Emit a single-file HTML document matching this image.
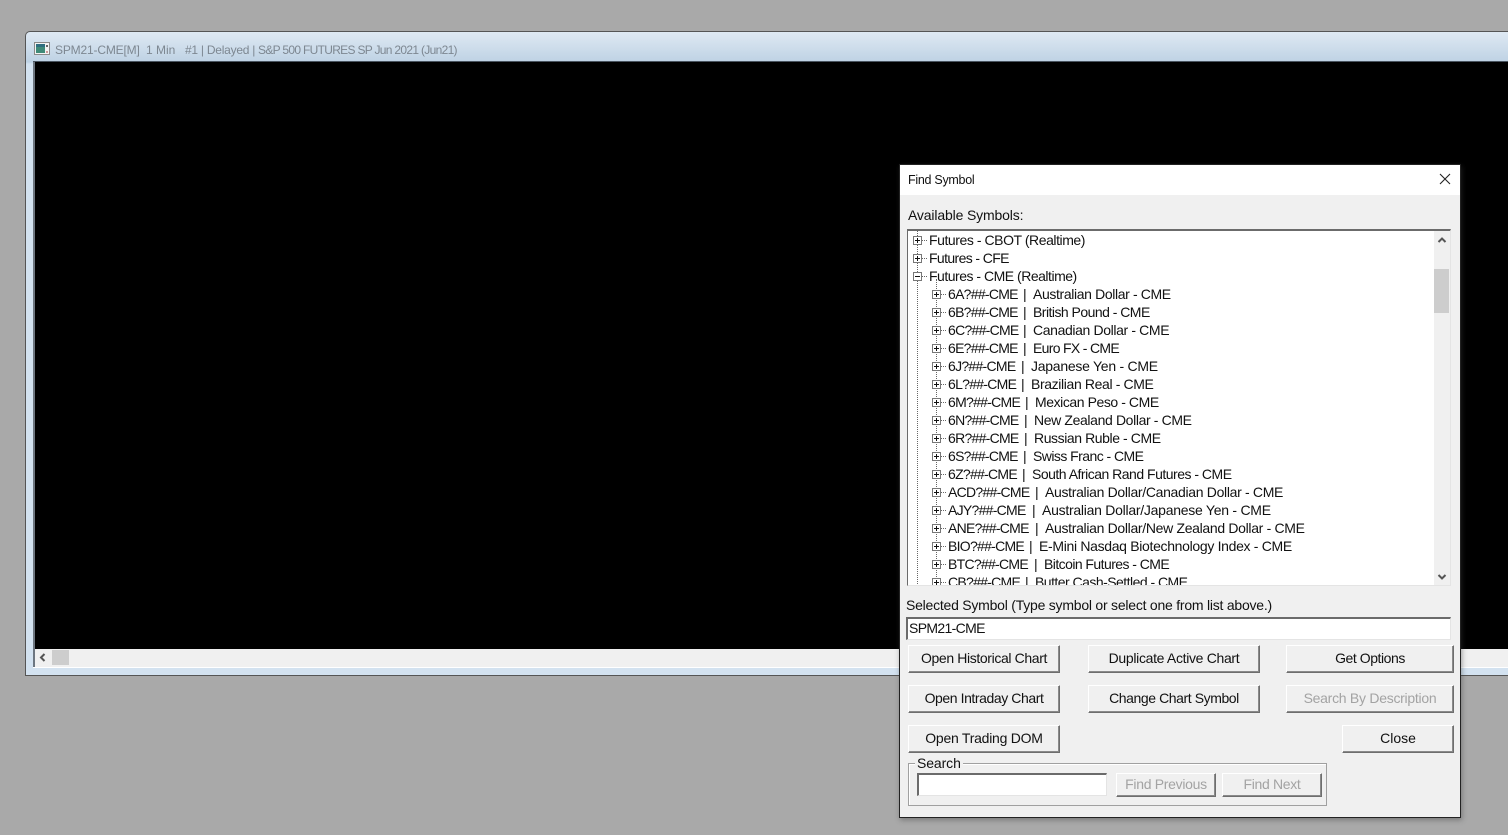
<!DOCTYPE html>
<html><head><meta charset="utf-8"><style>
*{box-sizing:border-box}
html,body{margin:0;padding:0}
body{width:1508px;height:835px;background:#a9a9a9;position:relative;overflow:hidden;font-family:"Liberation Sans",sans-serif;font-size:14px;color:#111}
.a{position:absolute}
.t{position:absolute;white-space:pre;line-height:18px;height:18px}
.b{position:absolute;background:#f0f0f0;border:1px solid;border-color:#fff #6e6e6e #6e6e6e #fff;box-shadow:inset -1px -1px 0 #8a8a8a;text-align:center;font-size:14px;color:#111;white-space:pre}
.d{color:#a3a3a3}
.in{position:absolute;background:#fff;border:1px solid;border-color:#6b6b6b #e4e4e4 #e4e4e4 #6b6b6b;border-top-width:2px;border-left-width:2px}
.r{position:absolute;left:0;width:520px;height:18px}
.r span{position:absolute;top:0;line-height:18px;white-space:pre;font-size:14px;letter-spacing:-.37px}
.r em{position:absolute;left:40px;top:0;line-height:18px;white-space:pre;font-style:normal;letter-spacing:-.72px}
.p{position:absolute;width:9px;height:9px;border:1px solid #777;background:#fff}
.p:before{content:"";position:absolute;left:1px;top:3px;width:5px;height:1px;background:#111}
.p.o:after{content:"";position:absolute;left:3px;top:1px;width:1px;height:5px;background:#111}
.dh{position:absolute;height:1px;width:5px;border-top:1px dotted #666}
.ti{color:#7d8791;font-size:12px;top:41px}
</style></head><body>
<div class="a" style="left:25px;top:31px;width:1483px;height:645px;border:1px solid #555;border-right:0;border-radius:5px 0 0 0;background:linear-gradient(#dfe9f3 0,#bed2e4 30px,#d3e2f0 32px);"></div>
<svg class="a" style="left:34px;top:42px" width="17" height="14"><rect x=".5" y=".5" width="15" height="12" fill="#f4f4f4" stroke="#8a8a8a"/><rect x="2" y="2" width="9" height="9" fill="#3f8a78"/><rect x="2" y="2" width="9" height="3" fill="#2f6f80"/><rect x="12" y="3" width="2" height="2" fill="#666"/><rect x="12" y="9" width="2" height="2" fill="#c99"/></svg>
<div class="t ti" style="left:55px;letter-spacing:-.17px">SPM21-CME[M]</div>
<div class="t ti" style="left:146px">1 Min</div>
<div class="t ti" style="left:185px;letter-spacing:-.25px">#1 | Delayed | </div>
<div class="t ti" style="left:258px;letter-spacing:-.69px">S&amp;P 500 FUTURES SP Jun 2021 (Jun21)</div>
<div class="a" style="left:33px;top:61px;width:1475px;height:1px;background:#4a5560"></div>
<div class="a" style="left:33px;top:62px;width:2px;height:606px;background:#6d7680"></div>
<div class="a" style="left:35px;top:62px;width:1473px;height:587px;background:#000"></div>
<div class="a" style="left:35px;top:649px;width:1473px;height:18px;background:#f0f0f0"></div>
<div class="a" style="left:52px;top:650px;width:17px;height:15px;background:#cdcdcd"></div>
<svg class="a" style="left:39px;top:653px" width="8" height="10"><path d="M5.5 1 L2 4.5 L5.5 8" fill="none" stroke="#555" stroke-width="2"/></svg>
<div class="a" style="left:33px;top:667px;width:1475px;height:1px;background:#fff"></div>
<div class="a" style="left:26px;top:668px;width:1482px;height:7px;background:#d3e2f0"></div>

<div class="a" style="left:899px;top:164px;width:562px;height:654px;background:#f0f0f0;border:1px solid #222;box-shadow:1px 2px 5px rgba(60,60,60,.45)">
<div class="a" style="left:0;top:0;width:560px;height:30px;background:#fff"></div>
</div>
<div class="t" style="left:908px;top:171px;font-size:12.5px;letter-spacing:-.28px">Find Symbol</div>
<svg class="a" style="left:1439px;top:173px" width="12" height="12"><path d="M1 1 L11 11 M11 1 L1 11" stroke="#222" stroke-width="1.1" fill="none"/></svg>
<div class="t" style="left:908px;top:206px;font-size:14px;letter-spacing:-.15px">Available Symbols:</div>

<div class="a" style="left:907px;top:229px;width:544px;height:357px;background:#fff;border:1px solid;border-color:#6b6b6b #e4e4e4 #e4e4e4 #6b6b6b;border-top-width:2px;overflow:hidden">
<div class="a" style="left:526px;top:0;width:16px;height:355px;background:#f0f0f0"></div>
<div class="a" style="left:526px;top:38px;width:15px;height:44px;background:#cdcdcd"></div>
<svg class="a" style="left:529px;top:4px" width="10" height="10"><path d="M1.5 7 L5 3.5 L8.5 7" fill="none" stroke="#555" stroke-width="2"/></svg>
<svg class="a" style="left:529px;top:341px" width="10" height="10"><path d="M1.5 3 L5 6.5 L8.5 3" fill="none" stroke="#555" stroke-width="2"/></svg>
<div class="a" style="left:9px;top:0;height:355px;border-left:1px dotted #666"></div>
<div class="a" style="left:28px;top:48px;height:310px;border-left:1px dotted #666"></div>
<div id="tree" class="a" style="left:0;top:0;width:526px;height:355px">
<div class="r" style="top:0"><i class="p o" style="left:5px;top:5px"></i><i class="dh" style="left:14px;top:9px"></i><span style="left:21px;letter-spacing:-.44px">Futures - CBOT (Realtime)</span></div>
<div class="r" style="top:18px"><i class="p o" style="left:5px;top:5px"></i><i class="dh" style="left:14px;top:9px"></i><span style="left:21px;letter-spacing:-.62px">Futures - CFE</span></div>
<div class="r" style="top:36px"><i class="p" style="left:5px;top:5px"></i><i class="dh" style="left:14px;top:9px"></i><span style="left:21px;letter-spacing:-.49px">Futures - CME (Realtime)</span></div>
<div class="r" style="top:54px"><i class="p o" style="left:24px;top:5px"></i><i class="dh" style="left:33px;top:9px"></i><em>6A?##-CME</em><span style="left:115px">|</span><span style="left:125px">Australian Dollar - CME</span></div>
<div class="r" style="top:72px"><i class="p o" style="left:24px;top:5px"></i><i class="dh" style="left:33px;top:9px"></i><em>6B?##-CME</em><span style="left:115px">|</span><span style="left:125px;letter-spacing:-.53px">British Pound - CME</span></div>
<div class="r" style="top:90px"><i class="p o" style="left:24px;top:5px"></i><i class="dh" style="left:33px;top:9px"></i><em>6C?##-CME</em><span style="left:115px">|</span><span style="left:125px">Canadian Dollar - CME</span></div>
<div class="r" style="top:108px"><i class="p o" style="left:24px;top:5px"></i><i class="dh" style="left:33px;top:9px"></i><em>6E?##-CME</em><span style="left:115px">|</span><span style="left:125px;letter-spacing:-.68px">Euro FX - CME</span></div>
<div class="r" style="top:126px"><i class="p o" style="left:24px;top:5px"></i><i class="dh" style="left:33px;top:9px"></i><em>6J?##-CME</em><span style="left:113px">|</span><span style="left:123px;letter-spacing:-.26px">Japanese Yen - CME</span></div>
<div class="r" style="top:144px"><i class="p o" style="left:24px;top:5px"></i><i class="dh" style="left:33px;top:9px"></i><em>6L?##-CME</em><span style="left:113px">|</span><span style="left:123px">Brazilian Real - CME</span></div>
<div class="r" style="top:162px"><i class="p o" style="left:24px;top:5px"></i><i class="dh" style="left:33px;top:9px"></i><em>6M?##-CME</em><span style="left:117px">|</span><span style="left:127px;letter-spacing:-.43px">Mexican Peso - CME</span></div>
<div class="r" style="top:180px"><i class="p o" style="left:24px;top:5px"></i><i class="dh" style="left:33px;top:9px"></i><em>6N?##-CME</em><span style="left:116px">|</span><span style="left:126px">New Zealand Dollar - CME</span></div>
<div class="r" style="top:198px"><i class="p o" style="left:24px;top:5px"></i><i class="dh" style="left:33px;top:9px"></i><em>6R?##-CME</em><span style="left:116px">|</span><span style="left:126px;letter-spacing:-.42px">Russian Ruble - CME</span></div>
<div class="r" style="top:216px"><i class="p o" style="left:24px;top:5px"></i><i class="dh" style="left:33px;top:9px"></i><em>6S?##-CME</em><span style="left:115px">|</span><span style="left:125px;letter-spacing:-.55px">Swiss Franc - CME</span></div>
<div class="r" style="top:234px"><i class="p o" style="left:24px;top:5px"></i><i class="dh" style="left:33px;top:9px"></i><em>6Z?##-CME</em><span style="left:114px">|</span><span style="left:124px;letter-spacing:-.5px">South African Rand Futures - CME</span></div>
<div class="r" style="top:252px"><i class="p o" style="left:24px;top:5px"></i><i class="dh" style="left:33px;top:9px"></i><em>ACD?##-CME</em><span style="left:127px">|</span><span style="left:137px;letter-spacing:-.32px">Australian Dollar/Canadian Dollar - CME</span></div>
<div class="r" style="top:270px"><i class="p o" style="left:24px;top:5px"></i><i class="dh" style="left:33px;top:9px"></i><em>AJY?##-CME</em><span style="left:124px">|</span><span style="left:134px;letter-spacing:-.26px">Australian Dollar/Japanese Yen - CME</span></div>
<div class="r" style="top:288px"><i class="p o" style="left:24px;top:5px"></i><i class="dh" style="left:33px;top:9px"></i><em>ANE?##-CME</em><span style="left:127px">|</span><span style="left:137px;letter-spacing:-.32px">Australian Dollar/New Zealand Dollar - CME</span></div>
<div class="r" style="top:306px"><i class="p o" style="left:24px;top:5px"></i><i class="dh" style="left:33px;top:9px"></i><em>BIO?##-CME</em><span style="left:121px">|</span><span style="left:131px;letter-spacing:-.32px">E-Mini Nasdaq Biotechnology Index - CME</span></div>
<div class="r" style="top:324px"><i class="p o" style="left:24px;top:5px"></i><i class="dh" style="left:33px;top:9px"></i><em>BTC?##-CME</em><span style="left:126px">|</span><span style="left:136px;letter-spacing:-.56px">Bitcoin Futures - CME</span></div>
<div class="r" style="top:342px"><i class="p o" style="left:24px;top:5px"></i><i class="dh" style="left:33px;top:9px"></i><em>CB?##-CME</em><span style="left:117px">|</span><span style="left:127px;letter-spacing:-.53px">Butter Cash-Settled - CME</span></div>
</div>
</div>

<div class="t" style="left:906px;top:596px;letter-spacing:-.23px">Selected Symbol (Type symbol or select one from list above.)</div>
<div class="in" style="left:906px;top:617px;width:545px;height:23px"></div>
<div class="t" style="left:909px;top:619px;letter-spacing:-.65px">SPM21-CME</div>

<div class="b" style="left:908px;top:645px;width:152px;height:28px;line-height:25px;letter-spacing:-.37px">Open Historical Chart</div>
<div class="b" style="left:908px;top:685px;width:152px;height:28px;line-height:25px;letter-spacing:-.42px">Open Intraday Chart</div>
<div class="b" style="left:908px;top:725px;width:152px;height:28px;line-height:25px;letter-spacing:-.25px">Open Trading DOM</div>
<div class="b" style="left:1088px;top:645px;width:172px;height:28px;line-height:25px;letter-spacing:-.32px">Duplicate Active Chart</div>
<div class="b" style="left:1088px;top:685px;width:172px;height:28px;line-height:25px;letter-spacing:-.42px">Change Chart Symbol</div>
<div class="b" style="left:1286px;top:645px;width:168px;height:28px;line-height:25px;letter-spacing:-.45px">Get Options</div>
<div class="b d" style="left:1286px;top:685px;width:168px;height:28px;line-height:25px;letter-spacing:-.27px">Search By Description</div>
<div class="b" style="left:1342px;top:725px;width:112px;height:28px;line-height:25px">Close</div>

<div class="a" style="left:908px;top:763px;width:419px;height:43px;border:1px solid #a0a0a0;box-shadow:inset 1px 1px 0 #fff"></div>
<div class="t" style="left:915px;top:754px;padding:0 2px;background:#f0f0f0;letter-spacing:-.1px">Search</div>
<div class="in" style="left:917px;top:773px;width:190px;height:23px"></div>
<div class="b d" style="left:1116px;top:773px;width:100px;height:24px;line-height:21px;letter-spacing:-.3px">Find Previous</div>
<div class="b d" style="left:1222px;top:773px;width:100px;height:24px;line-height:21px;letter-spacing:-.33px">Find Next</div>
</body></html>
